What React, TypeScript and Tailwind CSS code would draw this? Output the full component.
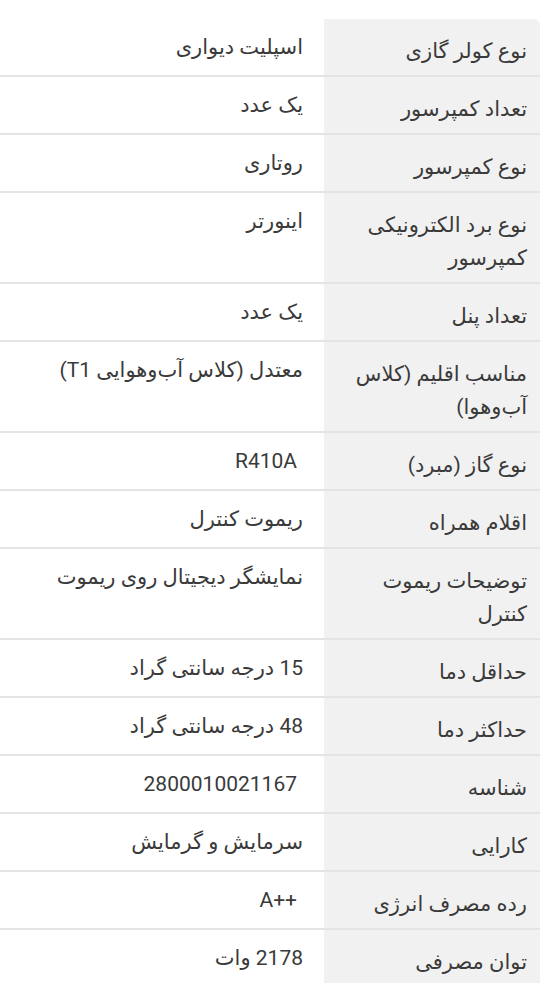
import React from "react";

type Row = { label: string; value: string; ltr?: boolean };

const rows: Row[] = [
  { label: "نوع کولر گازی", value: "اسپلیت دیواری" },
  { label: "تعداد کمپرسور", value: "یک عدد" },
  { label: "نوع کمپرسور", value: "روتاری" },
  { label: "نوع برد الکترونیکی کمپرسور", value: "اینورتر" },
  { label: "تعداد پنل", value: "یک عدد" },
  { label: "مناسب اقلیم (کلاس آب‌وهوا)", value: "معتدل (کلاس آب‌وهوایی T1)" },
  { label: "نوع گاز (مبرد)", value: "R410A", ltr: true },
  { label: "اقلام همراه", value: "ریموت کنترل" },
  { label: "توضیحات ریموت کنترل", value: "نمایشگر دیجیتال روی ریموت" },
  { label: "حداقل دما", value: "15 درجه سانتی گراد" },
  { label: "حداکثر دما", value: "48 درجه سانتی گراد" },
  { label: "شناسه", value: "2800010021167", ltr: true },
  { label: "کارایی", value: "سرمایش و گرمایش" },
  { label: "رده مصرف انرژی", value: "A++", ltr: true },
  { label: "توان مصرفی", value: "2178 وات" },
];

export default function App() {
  return (
    <div
      className="w-[543px] h-[983px] overflow-hidden bg-white pt-[19px]"
      style={{ fontFamily: 'Roboto, "DejaVu Sans", sans-serif' }}
    >
      <div dir="rtl" className="w-[540px] text-[21px] leading-[33px] text-[#3a3a3a]">
        {rows.map((r, i) => (
          <div
            key={i}
            className="flex border-b-2 border-[#e4e4e4]"
          >
            <div
              className={
                "w-[216px] shrink-0 bg-[#f1f1f1] pr-[13px] pl-[10px] pt-[16px] pb-[7px] text-right" +
                (i === 0 ? " rounded-tr-[6px]" : "")
              }
            >
              {r.label}
            </div>
            <div className="flex-1 pr-[21px] pt-[12px] text-right">
              {r.ltr ? (
                <span dir="ltr" className="inline-block pr-[6px]">
                  {r.value}
                </span>
              ) : (
                r.value
              )}
            </div>
          </div>
        ))}
      </div>
    </div>
  );
}
